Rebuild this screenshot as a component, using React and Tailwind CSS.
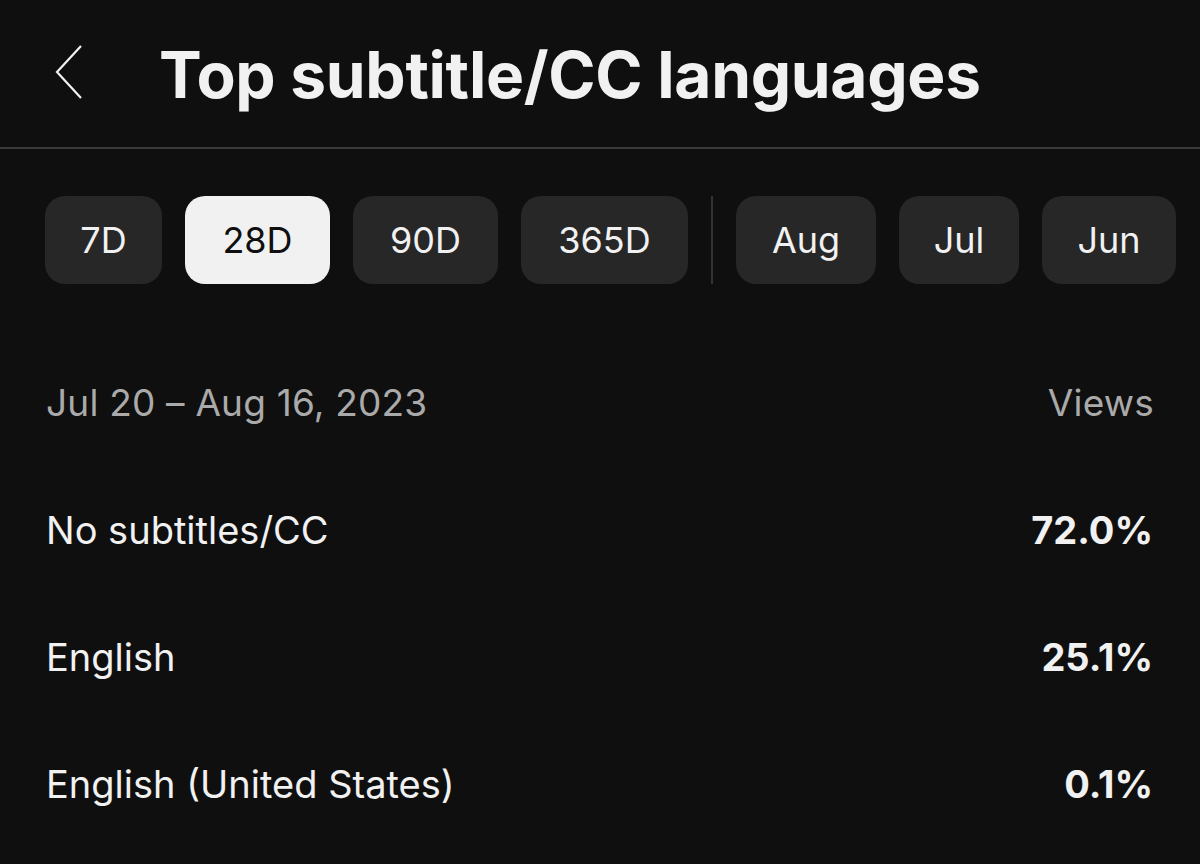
export default function App() {
  const chips = [
    { l: "7D", w: "w-[117px]" },
    { l: "28D", w: "w-[145px]", sel: true },
    { l: "90D", w: "w-[145px]" },
    { l: "365D", w: "w-[167px]" },
  ];
  const months = [
    { l: "Aug", w: "w-[140px]" },
    { l: "Jul", w: "w-[120px]" },
    { l: "Jun", w: "w-[134px]" },
  ];
  const rows = [
    ["No subtitles/CC", "72.0%"],
    ["English", "25.1%"],
    ["English (United States)", "0.1%"],
  ];
  return (
    <div className="w-[1200px] h-[864px] bg-[#0f0f0f] overflow-hidden text-white" style={{ fontFamily: "Inter, Roboto, 'Liberation Sans', sans-serif" }}>
      <div className="h-[149px] flex items-center pl-[54px] border-b-2 border-[#3b3b3b]">
        <svg width="30" height="58" viewBox="0 0 30 58" className="mt-[-2px]">
          <polyline points="27,2 3,28 27,54" fill="none" stroke="#f1f1f1" strokeWidth="2.2" />
        </svg>
        <h1 className="ml-[75px] text-[64px] font-bold text-[#f1f1f1] tracking-[-0.3px] leading-none mt-[2px]">Top subtitle/CC languages</h1>
      </div>
      <div className="flex items-center gap-[23px] pl-[45px] mt-[47px]">
        {chips.map((c) => (
          <div key={c.l} className={`${c.w} h-[88px] rounded-[20px] flex items-center justify-center text-[36px] ${c.sel ? "bg-[#f1f1f1] text-[#0f0f0f]" : "bg-[#272727] text-[#f1f1f1]"}`}>{c.l}</div>
        ))}
        <div className="w-[2px] h-[88px] bg-[#333333]" />
        {months.map((c) => (
          <div key={c.l} className={`${c.w} h-[88px] rounded-[20px] flex items-center justify-center text-[36px] bg-[#272727] text-[#f1f1f1]`}>{c.l}</div>
        ))}
      </div>
      <div className="flex justify-between items-center pl-[46px] pr-[46px] mt-[100px] text-[37px] tracking-[0.2px] text-[#aaaaaa] leading-none">
        <span>Jul 20 – Aug 16, 2023</span>
        <span>Views</span>
      </div>
      <div className="flex flex-col mt-[90px] pl-[46px] pr-[47px]">
        {rows.map(([a, b]) => (
          <div key={a} className="h-[127px] flex justify-between items-start text-[38px] leading-none text-[#f1f1f1]">
            <span>{a}</span>
            <span className="font-bold">{b}</span>
          </div>
        ))}
      </div>
    </div>
  );
}
